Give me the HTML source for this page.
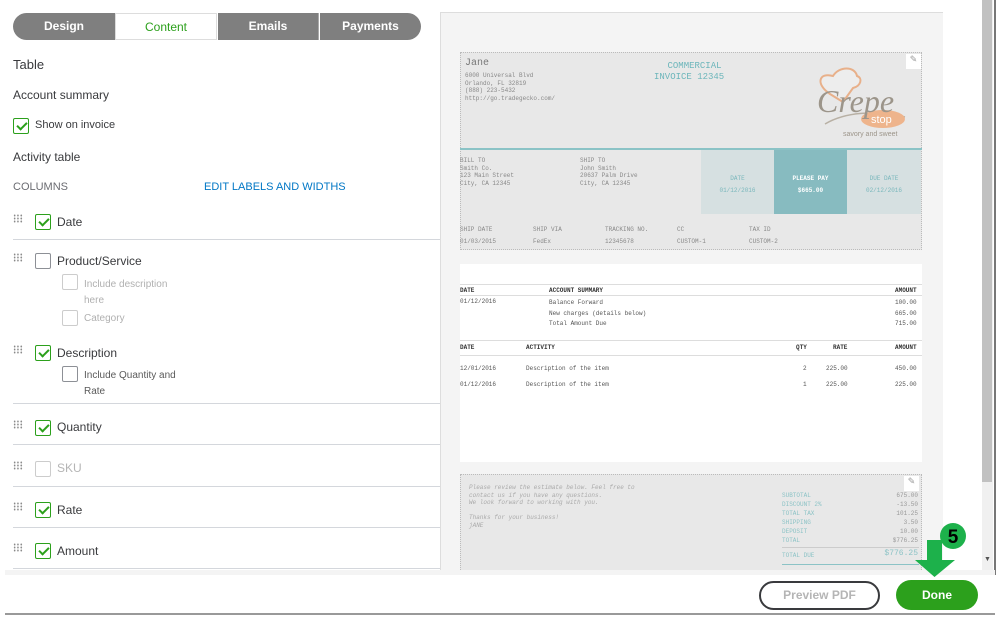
<!DOCTYPE html>
<html><head><meta charset="utf-8"><style>
*{margin:0;padding:0;box-sizing:border-box}
body{width:999px;height:618px;overflow:hidden;background:#fff;font-family:"Liberation Sans",sans-serif;position:relative;color:#393a3d}
.a{position:absolute}
.tab{position:absolute;top:13px;height:27px;line-height:26px;text-align:center;font-size:12px;font-weight:bold;color:#fff;background:#7f7f7f}
.cb{position:absolute;width:16px;height:16px;border:1px solid #8d9096;border-radius:2px;background:#fff}
.cb.on{border-color:#2ca01c}
.cb.on:after{content:"";position:absolute;left:5px;top:1px;width:4px;height:8px;border:solid #2ca01c;border-width:0 2px 2px 0;transform:rotate(45deg)}
.drag{position:absolute;width:10px;height:9px;background-image:radial-gradient(circle,#888 0.8px,transparent 1px);background-size:3.3px 3px}
.t{position:absolute;font-size:12px;color:#393a3d}
.s{position:absolute;font-size:10px;color:#8d9096}
.hr{position:absolute;left:13px;width:427px;height:1px;background:#d4d7dc}
.inv{font-family:"Liberation Mono",monospace;position:absolute;font-size:6px;color:#888;white-space:pre;line-height:7.5px}
.b{color:#333;font-weight:bold}
.d{color:#555}
</style></head><body>
<div class="tab" style="left:13px;width:102px;border-radius:14px 0 0 14px">Design</div>
<div class="tab" style="left:115px;width:102px;background:#fff;color:#2ca01c;border:1px solid #ddd;font-weight:normal">Content</div>
<div class="tab" style="left:218px;width:101px;border-right:1px solid #aaa">Emails</div>
<div class="tab" style="left:320px;width:101px;border-radius:0 14px 14px 0">Payments</div>

<div class="t" style="left:13px;top:57px;font-size:13px">Table</div>
<div class="t" style="left:13px;top:88px;font-size:12px">Account summary</div>
<div class="cb on" style="left:13px;top:118px"></div>
<div class="t" style="left:35px;top:119px;font-size:11px">Show on invoice</div>
<div class="t" style="left:13px;top:150px;font-size:12px">Activity table</div>
<div class="t" style="left:13px;top:181px;font-size:11px;color:#6b6c72">COLUMNS</div>
<div class="t" style="left:204px;top:181px;font-size:11px;color:#0077c5">EDIT LABELS AND WIDTHS</div>

<div class="drag" style="left:13px;top:214px"></div><div class="cb on" style="left:35px;top:214px"></div><div class="t" style="left:57px;top:215px">Date</div>
<div class="hr" style="top:239px"></div>
<div class="drag" style="left:13px;top:253px"></div><div class="cb" style="left:35px;top:253px"></div><div class="t" style="left:57px;top:254px">Product/Service</div>
<div class="cb" style="left:62px;top:274px;border-color:#ccc"></div><div class="s" style="left:84px;top:277px;color:#b0b0b0;line-height:16px">Include description<br>here</div>
<div class="cb" style="left:62px;top:310px;border-color:#ccc"></div><div class="s" style="left:84px;top:313px;color:#b0b0b0">Category</div>
<div class="drag" style="left:13px;top:345px"></div><div class="cb on" style="left:35px;top:345px"></div><div class="t" style="left:57px;top:346px">Description</div>
<div class="cb" style="left:62px;top:366px"></div><div class="s" style="left:84px;top:368px;color:#5a5a5a;line-height:16px">Include Quantity and<br>Rate</div>
<div class="hr" style="top:403px"></div>
<div class="drag" style="left:13px;top:420px"></div><div class="cb on" style="left:35px;top:420px"></div><div class="t" style="left:57px;top:420px">Quantity</div>
<div class="hr" style="top:444px"></div>
<div class="drag" style="left:13px;top:461px"></div><div class="cb" style="left:35px;top:461px;border-color:#ccc"></div><div class="t" style="left:57px;top:461px;color:#b5b5b5">SKU</div>
<div class="hr" style="top:486px"></div>
<div class="drag" style="left:13px;top:502px"></div><div class="cb on" style="left:35px;top:502px"></div><div class="t" style="left:57px;top:503px">Rate</div>
<div class="hr" style="top:527px"></div>
<div class="drag" style="left:13px;top:543px"></div><div class="cb on" style="left:35px;top:543px"></div><div class="t" style="left:57px;top:544px">Amount</div>
<div class="hr" style="top:568px"></div>

<div class="a" style="left:440px;top:12px;width:503px;height:558px;background:#f4f4f4;border-left:1px solid #ddd;border-top:1px solid #ddd"></div>
<div class="a" style="left:460px;top:52px;width:462px;height:198px;background:#e8e8e8;border:1px dotted #bbb"></div>
<div class="inv" style="left:465px;top:60px;font-size:10px;color:#777">Jane</div>
<div class="inv" style="left:465px;top:72px">6000 Universal Blvd
Orlando, FL 32819
(888) 223-5432
http://go.tradegecko.com/</div>
<div class="inv" style="left:654px;top:61px;font-size:9px;color:#6db6bb;line-height:11px;text-align:center">  COMMERCIAL
INVOICE 12345</div>
<div class="a" style="left:906px;top:54px;width:15px;height:15px;background:#fff;font-size:9px;color:#999;text-align:center">✎</div>
<svg class="a" style="left:795px;top:62px" width="115" height="76">
<path d="M35 32 C20 22 24 10 38 14 C44 4 60 4 62 14 C68 16 66 24 58 26 L48 40 Z" fill="#ededed" stroke="#e8b08a" stroke-width="2"/>
<path d="M30 62 C50 50 80 48 110 55" fill="none" stroke="#b8b0a4" stroke-width="1.5"/>
<ellipse cx="88" cy="57" rx="22" ry="9" fill="#eeb48c"/>
<text x="22" y="50" font-family="Liberation Serif,serif" font-style="italic" font-size="32" fill="#9c958a">Crepe</text>
<text x="76" y="61" font-family="Liberation Sans,sans-serif" font-size="11" fill="#fff">stop</text>
<text x="48" y="74" font-family="Liberation Sans,sans-serif" font-size="7" fill="#9c958a">savory and sweet</text>
</svg>
<div class="a" style="left:460px;top:148px;width:462px;height:2px;background:#8bc3c6"></div>
<div class="inv" style="left:460px;top:157px">BILL TO
Smith Co.
123 Main Street
City, CA 12345</div>
<div class="inv" style="left:580px;top:157px">SHIP TO
John Smith
20637 Palm Drive
City, CA 12345</div>
<div class="a" style="left:701px;top:150px;width:73px;height:64px;background:#d6e0e1"></div>
<div class="a" style="left:774px;top:150px;width:73px;height:64px;background:#87bbc0"></div>
<div class="a" style="left:847px;top:150px;width:74px;height:64px;background:#d6e0e1"></div>
<div class="inv" style="left:701px;width:73px;text-align:center;top:173px;color:#7ab7bc;line-height:12px">DATE
01/12/2016</div>
<div class="inv" style="left:774px;width:73px;text-align:center;top:173px;color:#fff;line-height:12px;font-weight:bold">PLEASE PAY
$665.00</div>
<div class="inv" style="left:847px;width:74px;text-align:center;top:173px;color:#7ab7bc;line-height:12px">DUE DATE
02/12/2016</div>
<div class="inv" style="left:460px;top:224px;line-height:12px">SHIP DATE
01/03/2015</div>
<div class="inv" style="left:533px;top:224px;line-height:12px">SHIP VIA
FedEx</div>
<div class="inv" style="left:605px;top:224px;line-height:12px">TRACKING NO.
12345678</div>
<div class="inv" style="left:677px;top:224px;line-height:12px">CC
CUSTOM-1</div>
<div class="inv" style="left:749px;top:224px;line-height:12px">TAX ID
CUSTOM-2</div>

<div class="a" style="left:460px;top:264px;width:462px;height:198px;background:#fff"></div>
<div class="a" style="left:460px;top:284px;width:462px;height:1px;background:#ddd"></div>
<div class="a" style="left:460px;top:295px;width:462px;height:1px;background:#ddd"></div>
<div class="inv b" style="left:460px;top:287px">DATE</div><div class="inv b" style="left:549px;top:287px">ACCOUNT SUMMARY</div><div class="inv b" style="left:895px;top:287px">AMOUNT</div>
<div class="inv d" style="left:460px;top:298px">01/12/2016</div>
<div class="inv d" style="left:549px;top:298px;line-height:10.5px">Balance Forward
New charges (details below)
Total Amount Due</div>
<div class="inv d" style="left:895px;top:298px;line-height:10.5px">100.00
665.00
715.00</div>
<div class="a" style="left:460px;top:340px;width:462px;height:1px;background:#ddd"></div>
<div class="a" style="left:460px;top:355px;width:462px;height:1px;background:#ddd"></div>
<div class="inv b" style="left:460px;top:344px">DATE</div><div class="inv b" style="left:526px;top:344px">ACTIVITY</div><div class="inv b" style="left:796px;top:344px">QTY</div><div class="inv b" style="left:833px;top:344px">RATE</div><div class="inv b" style="left:895px;top:344px">AMOUNT</div>
<div class="inv d" style="left:460px;top:361px;line-height:16px">12/01/2016
01/12/2016</div>
<div class="inv d" style="left:526px;top:361px;line-height:16px">Description of the item
Description of the item</div>
<div class="inv d" style="left:803px;top:361px;line-height:16px">2
1</div>
<div class="inv d" style="left:826px;top:361px;line-height:16px">225.00
225.00</div>
<div class="inv d" style="left:895px;top:361px;line-height:16px">450.00
225.00</div>

<div class="a" style="left:460px;top:474px;width:462px;height:96px;background:#e8e8e8;border:1px dotted #bbb;border-bottom:none"></div>
<div class="inv" style="left:469px;top:484px;font-style:italic;color:#aaa">Please review the estimate below. Feel free to
contact us if you have any questions.
We look forward to working with you.

Thanks for your business!
jANE</div>
<div class="a" style="left:904px;top:476px;width:15px;height:15px;background:#fff;font-size:9px;color:#999;text-align:center">✎</div>
<div class="inv" style="left:782px;top:491px;color:#8cc3c6;line-height:9px">SUBTOTAL
DISCOUNT 2%
TOTAL TAX
SHIPPING
DEPOSIT
TOTAL</div>
<div class="inv" style="left:870px;width:48px;text-align:right;top:491px;color:#999;line-height:9px">675.00
-13.50
101.25
3.50
10.00
$776.25</div>
<div class="a" style="left:782px;top:547px;width:137px;height:1px;background:#ccc"></div>
<div class="inv" style="left:782px;top:552px;color:#8cc3c6">TOTAL DUE</div>
<div class="inv" style="left:870px;width:48px;text-align:right;top:550px;color:#8cc3c6;font-size:8px">$776.25</div>
<div class="a" style="left:782px;top:564px;width:137px;height:1px;background:#8cc3c6"></div>

<div class="a" style="left:982px;top:0;width:11px;height:570px;background:#f0f0f0"></div>
<div class="a" style="left:982px;top:0;width:10px;height:482px;background:#c1c1c1"></div>
<div class="a" style="left:984px;top:556px;font-size:7px;color:#555">▼</div>
<div class="a" style="left:994px;top:0;width:2px;height:575px;background:#777"></div>
<div class="a" style="left:5px;top:570px;width:990px;height:5px;background:#f4f4f4"></div>

<div class="a" style="left:759px;top:581px;width:121px;height:29px;border:2px solid #393a3d;border-radius:15px;text-align:center;line-height:25px;font-size:12px;font-weight:bold;color:#b5b5b5">Preview PDF</div>
<div class="a" style="left:896px;top:580px;width:82px;height:30px;background:#2ca01c;border-radius:15px;text-align:center;line-height:30px;font-size:12px;font-weight:bold;color:#fff">Done</div>
<div class="a" style="left:5px;top:613px;width:990px;height:2px;background:#999"></div>

<svg class="a" style="left:915px;top:520px" width="56" height="60">
<path d="M12 20 H27 V40 H40 L19.5 57 L0 40 H12 Z" fill="#1db14b"/>
<circle cx="38" cy="16" r="13" fill="#1db14b"/>
<text x="38" y="23" text-anchor="middle" font-family="Liberation Sans,sans-serif" font-weight="bold" font-size="19" fill="#000">5</text>
</svg>
</body></html>
